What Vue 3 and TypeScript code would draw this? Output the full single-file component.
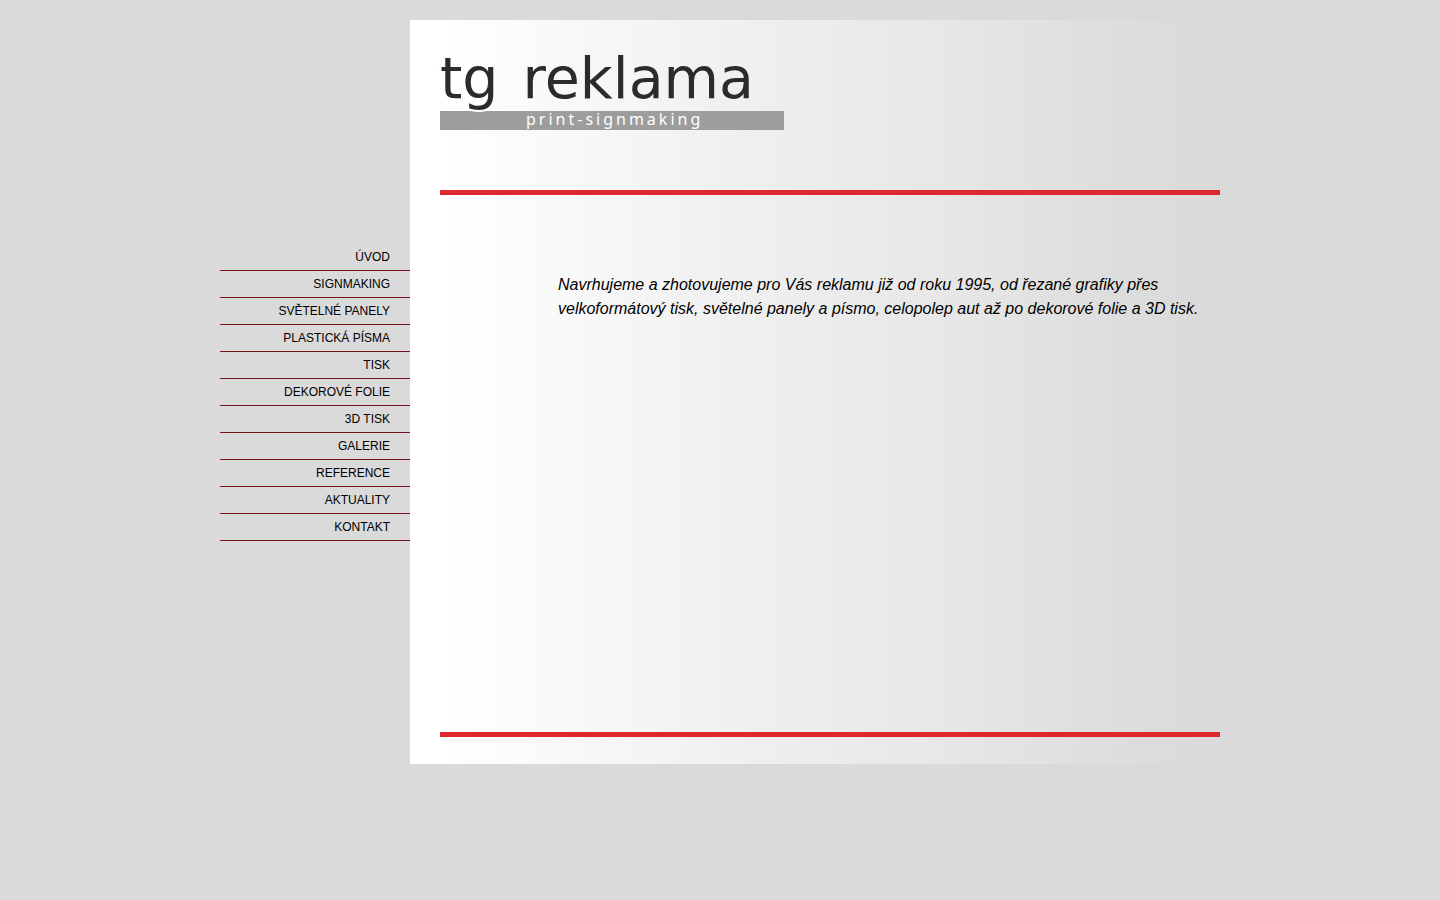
<script setup lang="ts">
const items: string[] = [
  'ÚVOD',
  'SIGNMAKING',
  'SVĚTELNÉ PANELY',
  'PLASTICKÁ PÍSMA',
  'TISK',
  'DEKOROVÉ FOLIE',
  '3D TISK',
  'GALERIE',
  'REFERENCE',
  'AKTUALITY',
  'KONTAKT',
]
</script>

<template>
  <div class="page">
    <nav class="menu">
      <a v-for="item in items" :key="item" class="menu-link" href="#">{{ item }}</a>
    </nav>
    <main class="panel">
      <header class="header">
        <a class="logo" href="#">
          <span class="brand"><span class="initials">tg</span> <span>reklama</span></span>
          <span class="tagline">print-signmaking</span>
        </a>
      </header>
      <section class="content">
        <p class="intro">
          Navrhujeme a zhotovujeme pro Vás reklamu již od roku 1995, od řezané grafiky přes
          velkoformátový tisk, světelné panely a písmo, celopolep aut až po dekorové folie a 3D tisk.
        </p>
      </section>
    </main>
  </div>
</template>

<style>
body {
  margin: 0;
  background: #dadada;
}
</style>

<style scoped>
.page {
  display: flex;
  max-width: 1000px;
  margin: 0 auto;
  padding: 20px 0;
  font-family: "Liberation Sans", Arial, sans-serif;
  color: #000;
}
.menu {
  flex: 0 0 190px;
  padding-top: 224px;
}
.menu-link {
  display: block;
  padding-right: 20px;
  border-bottom: 1px solid #78141e;
  font-size: 12px;
  line-height: 26px;
  text-align: right;
  color: #000;
  text-decoration: none;
}
.panel {
  flex: 1;
  padding: 0 0 27px 30px;
  background: linear-gradient(to right, #fff 4%, #f0f0f0 40%, #e7e7e7 66%, #dddddd 88%, #dadada 100%);
}
.header {
  padding: 40px 0 60px;
  border-bottom: 5px solid #dd282e;
}
.logo {
  display: block;
  width: 344px;
  text-decoration: none;
}
.brand {
  position: relative;
  display: flex;
  gap: 24px;
  margin-bottom: 15px;
  font-family: "DejaVu Sans", sans-serif;
  font-size: 57px;
  line-height: 36px;
  color: #2b2b2b;
}
.initials {
  -webkit-text-stroke: 4px #fcfcfc;
  paint-order: stroke fill;
}
.tagline {
  display: block;
  padding: 0 0 3px 86px;
  background: #9d9d9d;
  font-family: "Noto Sans", sans-serif;
  font-size: 16px;
  line-height: 16px;
  letter-spacing: 3px;
  color: #fff;
}
.content {
  min-height: 459px;
  padding: 78px 0 0 118px;
  border-bottom: 5px solid #dd282e;
}
.intro {
  margin: 0;
  font-size: 16px;
  font-style: italic;
  line-height: 24px;
}
</style>
